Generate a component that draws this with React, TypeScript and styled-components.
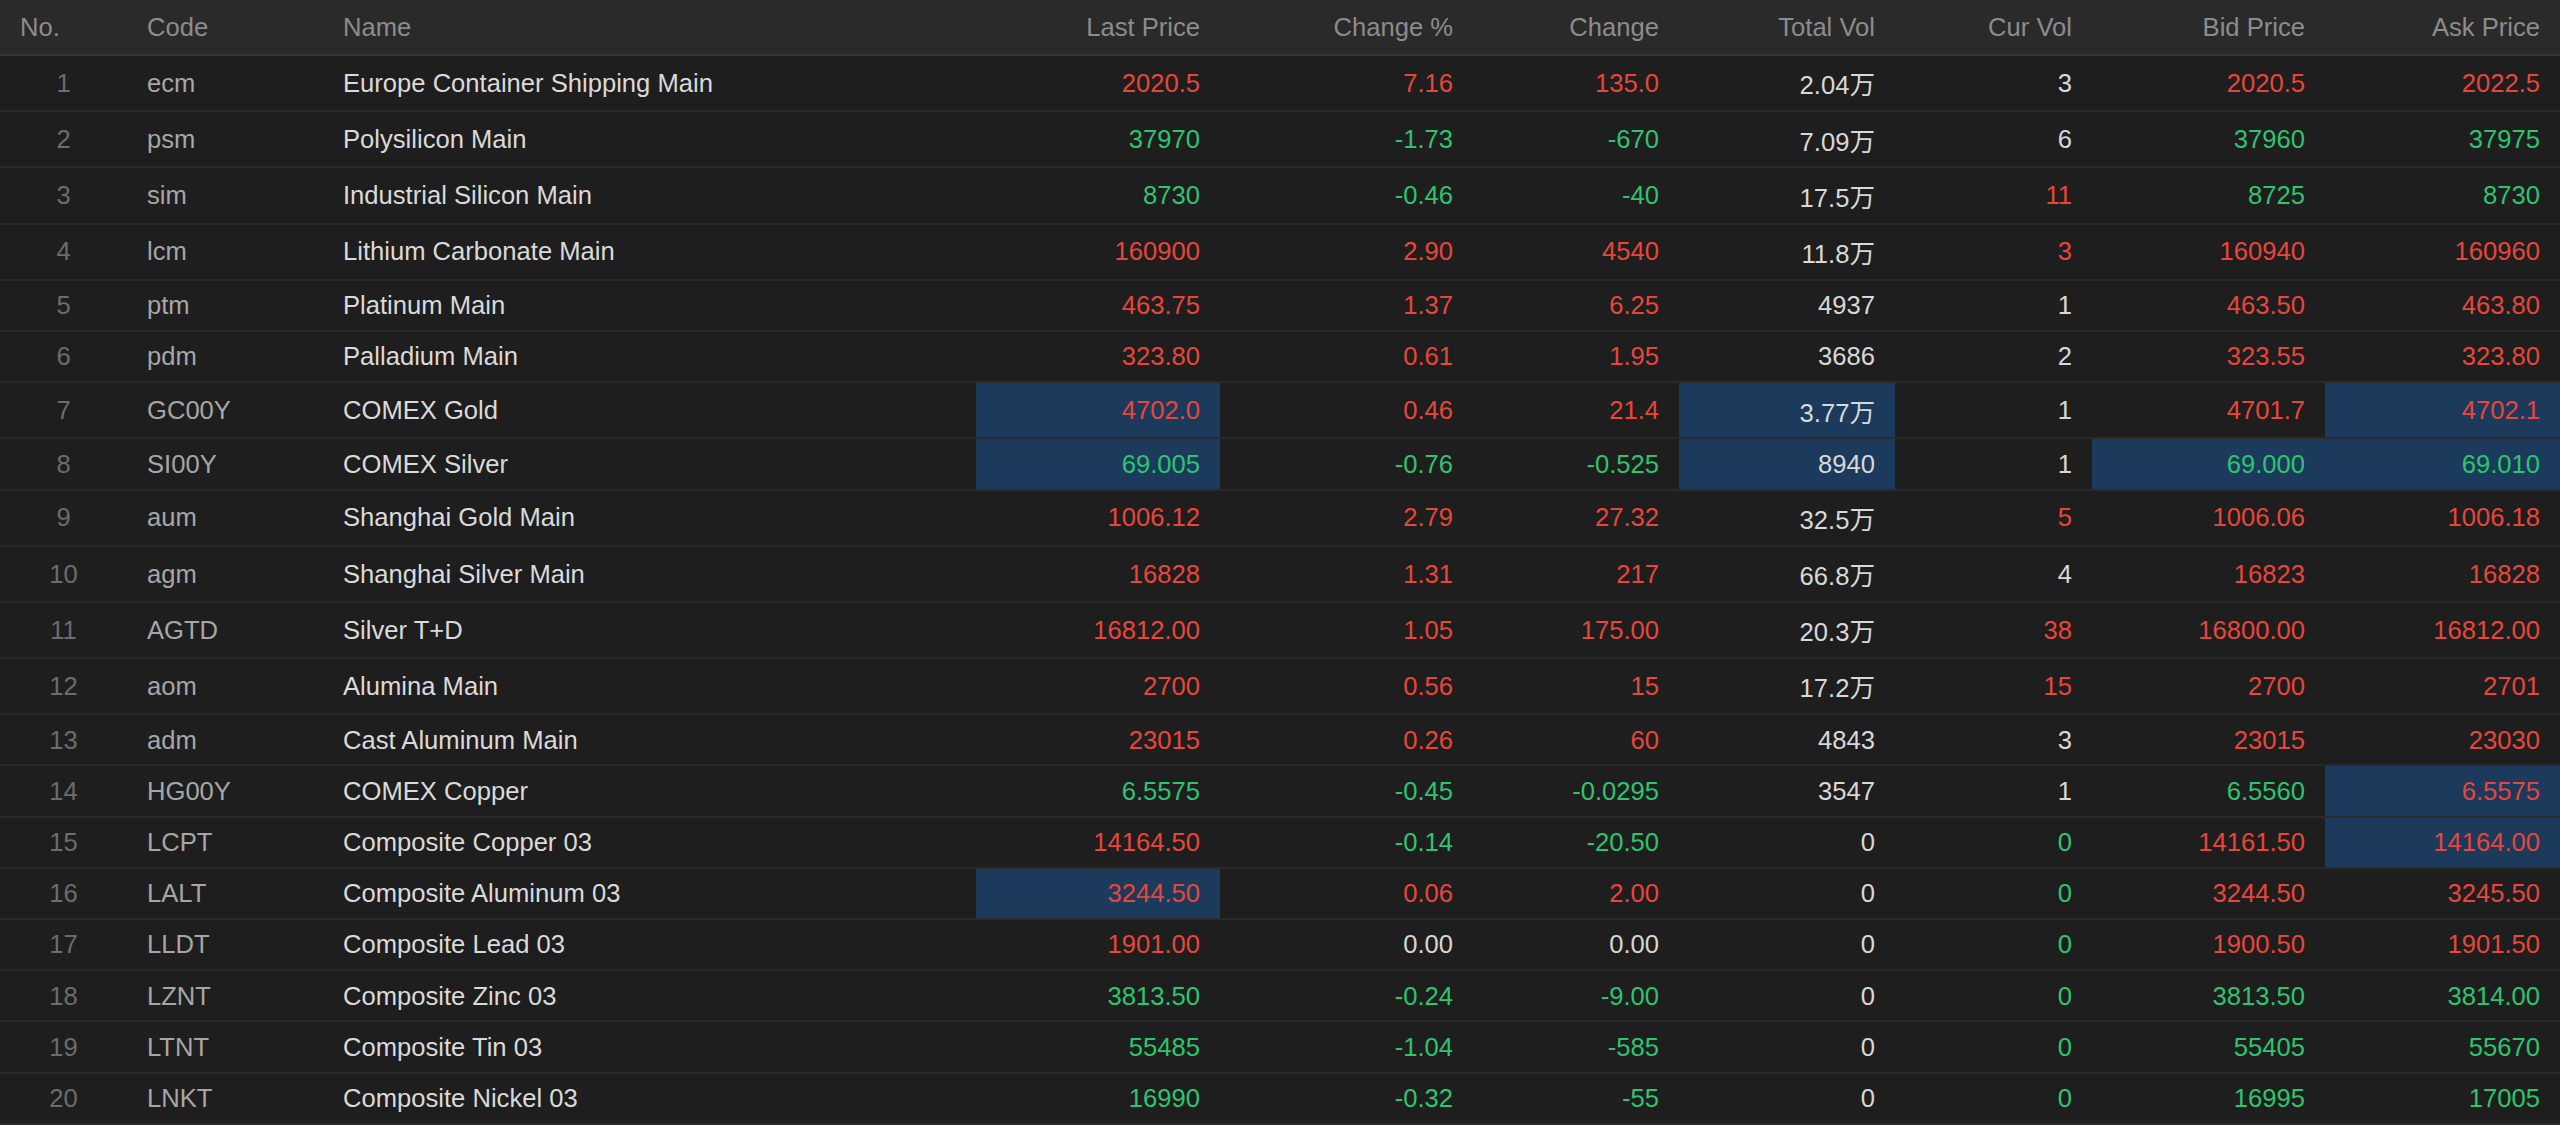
import { FunctionComponent } from "react";
import styled, { createGlobalStyle } from "styled-components";

type Tone = "up" | "down" | "flat";
type Field = "last" | "pct" | "chg" | "total" | "cur" | "bid" | "ask";

interface Quote {
  code: string;
  name: string;
  last: string;
  pct: string;
  chg: string;
  total: string;
  cur: string;
  bid: string;
  ask: string;
  tone: Tone;
  tones?: Partial<Record<Field, Tone>>;
  hl?: Field[];
}

const toneColor: Record<Tone, string> = {
  up: "#e8463b",
  down: "#2cc56e",
  flat: "#d6d6d6",
};

const columns: { key: string; label: string; width: number; align: "left" | "right" }[] = [
  { key: "no", label: "No.", width: 127, align: "left" },
  { key: "code", label: "Code", width: 196, align: "left" },
  { key: "name", label: "Name", width: 653, align: "left" },
  { key: "last", label: "Last Price", width: 244, align: "right" },
  { key: "pct", label: "Change %", width: 253, align: "right" },
  { key: "chg", label: "Change", width: 206, align: "right" },
  { key: "total", label: "Total Vol", width: 216, align: "right" },
  { key: "cur", label: "Cur Vol", width: 197, align: "right" },
  { key: "bid", label: "Bid Price", width: 233, align: "right" },
  { key: "ask", label: "Ask Price", width: 235, align: "right" },
];

const quotes: Quote[] = [
  { code: "ecm", name: "Europe Container Shipping Main", last: "2020.5", pct: "7.16", chg: "135.0", total: "2.04万", cur: "3", bid: "2020.5", ask: "2022.5", tone: "up" },
  { code: "psm", name: "Polysilicon Main", last: "37970", pct: "-1.73", chg: "-670", total: "7.09万", cur: "6", bid: "37960", ask: "37975", tone: "down" },
  { code: "sim", name: "Industrial Silicon Main", last: "8730", pct: "-0.46", chg: "-40", total: "17.5万", cur: "11", bid: "8725", ask: "8730", tone: "down", tones: { cur: "up" } },
  { code: "lcm", name: "Lithium Carbonate Main", last: "160900", pct: "2.90", chg: "4540", total: "11.8万", cur: "3", bid: "160940", ask: "160960", tone: "up", tones: { cur: "up" } },
  { code: "ptm", name: "Platinum Main", last: "463.75", pct: "1.37", chg: "6.25", total: "4937", cur: "1", bid: "463.50", ask: "463.80", tone: "up" },
  { code: "pdm", name: "Palladium Main", last: "323.80", pct: "0.61", chg: "1.95", total: "3686", cur: "2", bid: "323.55", ask: "323.80", tone: "up" },
  { code: "GC00Y", name: "COMEX Gold", last: "4702.0", pct: "0.46", chg: "21.4", total: "3.77万", cur: "1", bid: "4701.7", ask: "4702.1", tone: "up", hl: ["last", "total", "ask"] },
  { code: "SI00Y", name: "COMEX Silver", last: "69.005", pct: "-0.76", chg: "-0.525", total: "8940", cur: "1", bid: "69.000", ask: "69.010", tone: "down", hl: ["last", "total", "bid", "ask"] },
  { code: "aum", name: "Shanghai Gold Main", last: "1006.12", pct: "2.79", chg: "27.32", total: "32.5万", cur: "5", bid: "1006.06", ask: "1006.18", tone: "up", tones: { cur: "up" } },
  { code: "agm", name: "Shanghai Silver Main", last: "16828", pct: "1.31", chg: "217", total: "66.8万", cur: "4", bid: "16823", ask: "16828", tone: "up" },
  { code: "AGTD", name: "Silver T+D", last: "16812.00", pct: "1.05", chg: "175.00", total: "20.3万", cur: "38", bid: "16800.00", ask: "16812.00", tone: "up", tones: { cur: "up" } },
  { code: "aom", name: "Alumina Main", last: "2700", pct: "0.56", chg: "15", total: "17.2万", cur: "15", bid: "2700", ask: "2701", tone: "up", tones: { cur: "up" } },
  { code: "adm", name: "Cast Aluminum Main", last: "23015", pct: "0.26", chg: "60", total: "4843", cur: "3", bid: "23015", ask: "23030", tone: "up" },
  { code: "HG00Y", name: "COMEX Copper", last: "6.5575", pct: "-0.45", chg: "-0.0295", total: "3547", cur: "1", bid: "6.5560", ask: "6.5575", tone: "down", tones: { ask: "up" }, hl: ["ask"] },
  { code: "LCPT", name: "Composite Copper 03", last: "14164.50", pct: "-0.14", chg: "-20.50", total: "0", cur: "0", bid: "14161.50", ask: "14164.00", tone: "down", tones: { last: "up", cur: "down", bid: "up", ask: "up" }, hl: ["ask"] },
  { code: "LALT", name: "Composite Aluminum 03", last: "3244.50", pct: "0.06", chg: "2.00", total: "0", cur: "0", bid: "3244.50", ask: "3245.50", tone: "up", tones: { cur: "down" }, hl: ["last"] },
  { code: "LLDT", name: "Composite Lead 03", last: "1901.00", pct: "0.00", chg: "0.00", total: "0", cur: "0", bid: "1900.50", ask: "1901.50", tone: "up", tones: { pct: "flat", chg: "flat", cur: "down" } },
  { code: "LZNT", name: "Composite Zinc 03", last: "3813.50", pct: "-0.24", chg: "-9.00", total: "0", cur: "0", bid: "3813.50", ask: "3814.00", tone: "down", tones: { cur: "down" } },
  { code: "LTNT", name: "Composite Tin 03", last: "55485", pct: "-1.04", chg: "-585", total: "0", cur: "0", bid: "55405", ask: "55670", tone: "down", tones: { cur: "down" } },
  { code: "LNKT", name: "Composite Nickel 03", last: "16990", pct: "-0.32", chg: "-55", total: "0", cur: "0", bid: "16995", ask: "17005", tone: "down", tones: { cur: "down" } },
];

const priceFields: Field[] = ["last", "pct", "chg", "total", "cur", "bid", "ask"];

const GlobalStyle = createGlobalStyle`
  body {
    margin: 0;
    background: #ffffff;
    font-family: "Liberation Sans", Arial, "Noto Sans CJK SC", sans-serif;
  }
`;

const Table = styled.table`
  width: 2560px;
  border-collapse: collapse;
  table-layout: fixed;
  background: #1e1e1e;
  font-size: 25.6px;
  line-height: 38.4px;
`;

const Col = styled.col<{ $width: number }>`
  width: ${(p) => p.$width}px;
`;

const HeadCell = styled.th<{ $align: "left" | "right" }>`
  background: #2a2a2a;
  color: #8c8c8c;
  font-weight: normal;
  text-align: ${(p) => p.$align};
  padding: 7.8px 20px;
  border-bottom: 2px solid #363636;
  white-space: nowrap;
`;

const Row = styled.tr`
  border-bottom: 2px solid #2a2a2a;
`;

const IndexCell = styled.td`
  color: #6c6c6c;
  text-align: center;
  padding: 5.4px 0;
`;

const CodeCell = styled.td`
  color: #a6a6a6;
  padding: 5.4px 20px;
  white-space: nowrap;
`;

const NameCell = styled.td`
  color: #dadada;
  padding: 5.4px 20px;
  white-space: nowrap;
`;

const ValueCell = styled.td<{ $color: string; $highlight: boolean }>`
  color: ${(p) => p.$color};
  background: ${(p) => (p.$highlight ? "#1b3a5c" : "transparent")};
  text-align: right;
  padding: 5.4px 20px;
  white-space: nowrap;
`;

const Unit = styled.span`
  font-family: "Noto Sans CJK SC", sans-serif;
  line-height: 43.2px;
`;

const volumeColor = "#d8d8d8";

const cellColor = (q: Quote, f: Field): string => {
  const override = q.tones?.[f];
  if (override) return toneColor[override];
  if (f === "total" || f === "cur") return volumeColor;
  return toneColor[q.tone];
};

const renderValue = (v: string) =>
  v.endsWith("万") ? (
    <>
      {v.slice(0, -1)}
      <Unit>万</Unit>
    </>
  ) : (
    v
  );

const QuoteTable: FunctionComponent = () => (
  <Table>
    <colgroup>
      {columns.map((c) => (
        <Col key={c.key} $width={c.width} />
      ))}
    </colgroup>
    <thead>
      <tr>
        {columns.map((c) => (
          <HeadCell key={c.key} $align={c.align}>
            {c.label}
          </HeadCell>
        ))}
      </tr>
    </thead>
    <tbody>
      {quotes.map((q, i) => (
        <Row key={q.code}>
          <IndexCell>{i + 1}</IndexCell>
          <CodeCell>{q.code}</CodeCell>
          <NameCell>{q.name}</NameCell>
          {priceFields.map((f) => (
            <ValueCell key={f} $color={cellColor(q, f)} $highlight={!!q.hl?.includes(f)}>
              {renderValue(q[f])}
            </ValueCell>
          ))}
        </Row>
      ))}
    </tbody>
  </Table>
);

const App: FunctionComponent = () => (
  <>
    <GlobalStyle />
    <QuoteTable />
  </>
);

export default App;
